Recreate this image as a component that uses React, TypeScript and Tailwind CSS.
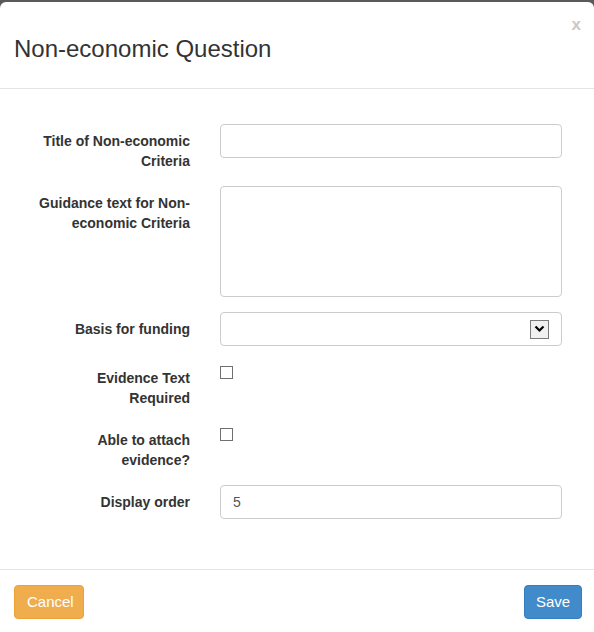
import React from 'react'

// Modal "Non-economic Question" — gaya Bootstrap 3
const font = { fontFamily: '"Liberation Sans", Arial, Helvetica, sans-serif' }

function Row({ label, children }: { label: React.ReactNode; children: React.ReactNode }) {
  return (
    <div className="flex mb-[15px]">
      <label className="w-[176px] shrink-0 text-right font-bold text-[14px] leading-5 text-[#333] pt-[7px]">{label}</label>
      <div className="ml-[30px] w-[342px]">{children}</div>
    </div>
  )
}

function Checkbox() {
  return <span className="block mt-[5px] w-[13px] h-[13px] border border-[#707070] bg-white" />
}

export default function App() {
  return (
    <div style={font} className="w-[594px] h-[632px] bg-[#5a5a5a] pt-[2px] overflow-hidden">
      <div className="bg-white rounded-t-[6px] h-[640px]">
        <div className="relative h-[87px] border-b border-[#e5e5e5] px-[14px] flex items-center">
          <h4 className="text-[24px] text-[#333] mt-[7px]">Non-economic Question</h4>
          <span className="absolute right-[13px] top-[14px] text-[17px] font-bold text-[#c8c8c8] leading-none">x</span>
        </div>

        <div className="pl-[14px] pt-[35px] pb-[35px]">
          <Row label={<>Title of Non-economic<br />Criteria</>}>
            <div className="h-[34px] border border-[#ccc] rounded-[4px]" />
          </Row>
          <Row label={<>Guidance text for Non-<br />economic Criteria</>}>
            <div className="h-[111px] border border-[#ccc] rounded-[4px]" />
          </Row>
          <Row label="Basis for funding">
            <div className="h-[34px] border border-[#ccc] rounded-[4px] flex items-center justify-end pr-[12px]">
              <span className="w-[19px] h-[19px] border border-[#7a7a7a] bg-[#f0f0f0] flex items-center justify-center">
                <svg width="11" height="8" viewBox="0 0 11 8">
                  <path d="M1.5 1.5 L5.5 5.5 L9.5 1.5" fill="none" stroke="#000" strokeWidth="2.2" />
                </svg>
              </span>
            </div>
          </Row>
          <Row label={<>Evidence Text<br />Required</>}>
            <Checkbox />
          </Row>
          <Row label={<>Able to attach<br />evidence?</>}>
            <Checkbox />
          </Row>
          <Row label="Display order">
            <div className="h-[34px] border border-[#ccc] rounded-[4px] flex items-center px-[12px] text-[14px] text-[#555]">5</div>
          </Row>
        </div>

        <div className="border-t border-[#e5e5e5] px-[14px] pt-[15px] flex justify-between">
          <button className="h-[34px] px-[12px] w-[70px] rounded-[4px] bg-[#f0ad4e] border border-[#eea236] text-white text-[15px]">Cancel</button>
          <button className="h-[34px] w-[58px] mr-[-2px] rounded-[4px] bg-[#428bca] border border-[#357ebd] text-white text-[15px]">Save</button>
        </div>
      </div>
    </div>
  )
}
